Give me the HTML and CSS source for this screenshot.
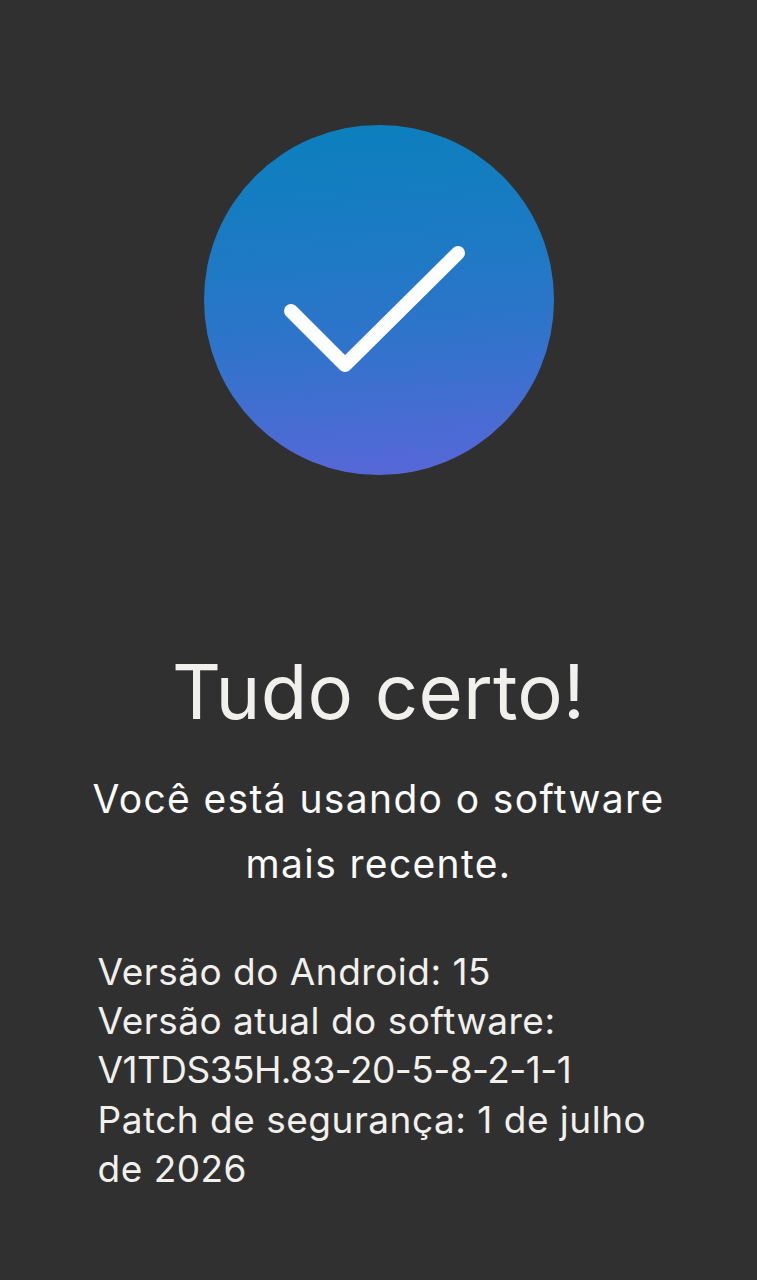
FILE: index.html
```html
<html>
    <head>
        <title>Tudo certo</title>
        <meta charset="utf-8">
        <link rel="stylesheet" href="styles.css">
    </head>
    <body>
        <div id="badge">
            <svg width="350" height="350" viewBox="0 0 350 350">
                <path d="M87 186 L141 240 L254 128" fill="none" stroke="#fff" stroke-width="14" stroke-linecap="round" stroke-linejoin="round"/>
            </svg>
        </div>

        <h1 id="title">Tudo certo!</h1>
        <p id="message">Você está usando o software<br>mais recente.</p>

        <div id="details">
            <div>Versão do Android: 15</div>
            <div>Versão atual do software:</div>
            <div class="build">V1TDS35H.83-20-5-8-2-1-1</div>
            <div>Patch de segurança: 1 de julho de 2026</div>
        </div>
    </body>
</html>
```

FILE: styles.css
```css
body{
    margin: 0;
    height: 1280px;
    overflow: hidden;
    background-color: #303030;
    color: #f2f0ed;
    font-family: "Inter", sans-serif;
    display: flex;
    flex-direction: column;
    align-items: center;
}

#badge{
    width: 350px;
    height: 350px;
    margin-top: 125px;
    border-radius: 50%;
    background: linear-gradient(176deg, #0a80bc 0%, #1c7ac4 35%, #2f74cb 60%, #5a66d8 100%);
}

#badge svg{
    display: block;
}

#title{
    margin: 174px 0 0 0;
    font-size: 76px;
    line-height: 84px;
    letter-spacing: 0.2px;
    font-weight: 400;
}

#message{
    margin: 33px 0 0 0;
    font-size: 39px;
    line-height: 65px;
    letter-spacing: 1.35px;
    text-align: center;
    color: #fbfbfb;
}

#details{
    width: 562px;
    margin-top: 51px;
    font-size: 37px;
    line-height: 49.2px;
    letter-spacing: 0.5px;
}

.build{
    letter-spacing: -0.55px;
}
```
